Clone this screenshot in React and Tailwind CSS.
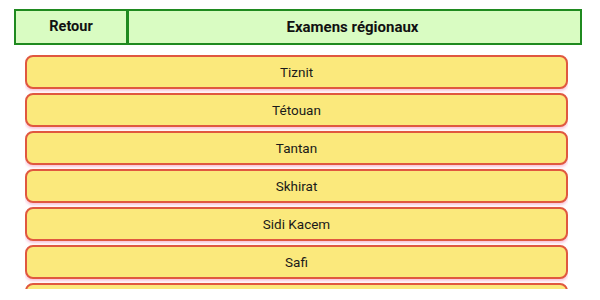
import React from "react";

const cities = ["Tiznit", "Tétouan", "Tantan", "Skhirat", "Sidi Kacem", "Safi"];

export default function App() {
  return (
    <div
      className="w-[600px] h-[300px] overflow-hidden bg-white"
      style={{ fontFamily: "Roboto, 'Liberation Sans', sans-serif" }}
    >
      <div className="ml-[14px] mr-[18px] mt-[9px] h-[36px] flex border-2 border-[#1f8a1f] bg-[#d9fcc2]">
        <div className="w-[113px] flex items-center justify-center border-r-[3px] border-[#1f8a1f] text-[14.5px] font-bold text-[#111]">
          Retour
        </div>
        <div className="flex-1 flex items-center justify-center text-[15px] font-bold text-[#111] pr-[4px]">
          Examens régionaux
        </div>
      </div>
      <div className="ml-[25px] mr-[32px] mt-[10px] h-[234px] overflow-hidden flex flex-col gap-[4px]">
        {cities.map((c) => (
          <div
            key={c}
            className="h-[34px] shrink-0 flex items-center justify-center rounded-[8px] border-2 border-[#e0583f] bg-[#fbe97c] text-[13.5px] text-[#1a1a1a] shadow-[0_2px_3px_rgba(240,120,170,0.45)]"
          >
            {c}
          </div>
        ))}
        <div className="h-[34px] shrink-0 rounded-[8px] border-2 border-[#e0583f] bg-[#fbe97c]" />
      </div>
    </div>
  );
}
